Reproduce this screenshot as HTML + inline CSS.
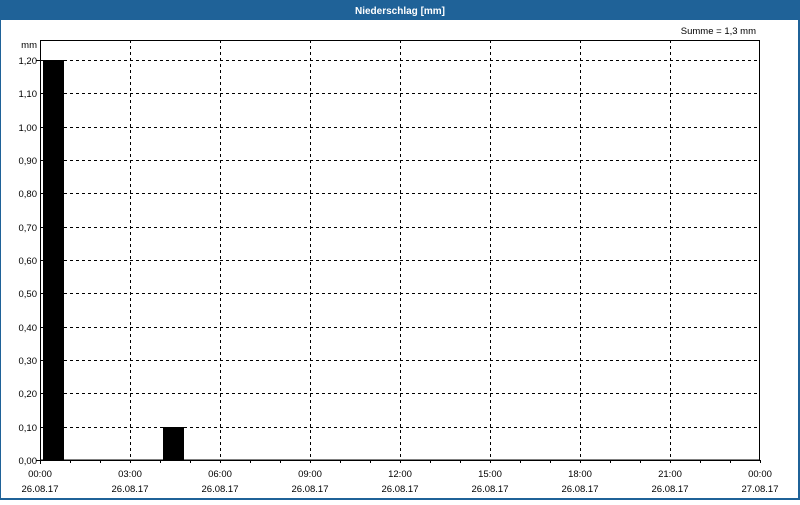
<!DOCTYPE html>
<html><head><style>
body{margin:0;width:800px;height:500px;overflow:hidden;background:#fff}
</style></head><body>
<svg width="800" height="500" xmlns="http://www.w3.org/2000/svg" font-family="'Liberation Sans',sans-serif" font-size="9.5">
<rect x="0" y="0" width="800" height="500" fill="#1f6298"/>
<rect x="1" y="20" width="797" height="478" fill="#fff"/>
<text x="400" y="14" fill="#fff" font-weight="bold" text-anchor="middle" font-size="10">Niederschlag [mm]</text>
<text x="756" y="34" text-anchor="end" fill="#000">Summe = 1,3 mm</text>
<text x="37" y="48" text-anchor="end" fill="#000">mm</text>
<g stroke="#000" stroke-width="1" stroke-dasharray="3,3" shape-rendering="crispEdges">
<line x1="40" y1="60.5" x2="760" y2="60.5"/>
<line x1="40" y1="93.5" x2="760" y2="93.5"/>
<line x1="40" y1="127.5" x2="760" y2="127.5"/>
<line x1="40" y1="160.5" x2="760" y2="160.5"/>
<line x1="40" y1="193.5" x2="760" y2="193.5"/>
<line x1="40" y1="227.5" x2="760" y2="227.5"/>
<line x1="40" y1="260.5" x2="760" y2="260.5"/>
<line x1="40" y1="293.5" x2="760" y2="293.5"/>
<line x1="40" y1="327.5" x2="760" y2="327.5"/>
<line x1="40" y1="360.5" x2="760" y2="360.5"/>
<line x1="40" y1="393.5" x2="760" y2="393.5"/>
<line x1="40" y1="427.5" x2="760" y2="427.5"/>
<line x1="130.5" y1="40" x2="130.5" y2="460"/>
<line x1="220.5" y1="40" x2="220.5" y2="460"/>
<line x1="310.5" y1="40" x2="310.5" y2="460"/>
<line x1="400.5" y1="40" x2="400.5" y2="460"/>
<line x1="490.5" y1="40" x2="490.5" y2="460"/>
<line x1="580.5" y1="40" x2="580.5" y2="460"/>
<line x1="670.5" y1="40" x2="670.5" y2="460"/>
</g>
<rect x="43" y="60" width="21" height="400" fill="#000"/>
<rect x="163" y="427" width="21" height="33" fill="#000"/>
<g stroke="#000" shape-rendering="crispEdges">
<rect x="40.5" y="40.5" width="719" height="419.5" fill="none"/>
<path d="M40 460.5h720 M40.5 460v4 M70.5 460v3 M100.5 460v3 M130.5 460v3 M160.5 460v3 M190.5 460v3 M220.5 460v3 M250.5 460v3 M280.5 460v3 M310.5 460v3 M340.5 460v3 M370.5 460v3 M400.5 460v3 M430.5 460v3 M460.5 460v3 M490.5 460v3 M520.5 460v3 M550.5 460v3 M580.5 460v3 M610.5 460v3 M640.5 460v3 M670.5 460v3 M700.5 460v3 M730.5 460v3 M760.5 460v3 M36 60.5h4 M36 460.5h4"/>
</g>
<g text-anchor="end" fill="#000">
<text x="37" y="64">1,20</text><text x="37" y="97">1,10</text><text x="37" y="131">1,00</text>
<text x="37" y="164">0,90</text><text x="37" y="197">0,80</text><text x="37" y="231">0,70</text>
<text x="37" y="264">0,60</text><text x="37" y="297">0,50</text><text x="37" y="331">0,40</text>
<text x="37" y="364">0,30</text><text x="37" y="397">0,20</text><text x="37" y="431">0,10</text>
<text x="37" y="464">0,00</text>
</g>
<g text-anchor="middle" fill="#000">
<text x="40" y="477">00:00</text><text x="40" y="492">26.08.17</text>
<text x="130" y="477">03:00</text><text x="130" y="492">26.08.17</text>
<text x="220" y="477">06:00</text><text x="220" y="492">26.08.17</text>
<text x="310" y="477">09:00</text><text x="310" y="492">26.08.17</text>
<text x="400" y="477">12:00</text><text x="400" y="492">26.08.17</text>
<text x="490" y="477">15:00</text><text x="490" y="492">26.08.17</text>
<text x="580" y="477">18:00</text><text x="580" y="492">26.08.17</text>
<text x="670" y="477">21:00</text><text x="670" y="492">26.08.17</text>
<text x="760" y="477">00:00</text><text x="760" y="492">27.08.17</text>
</g>
</svg>
</body></html>
